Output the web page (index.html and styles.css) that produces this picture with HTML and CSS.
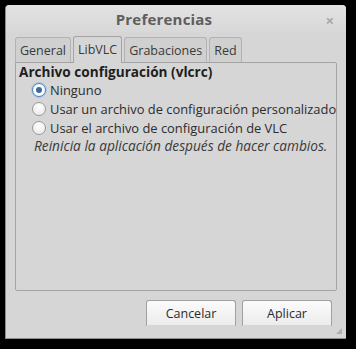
FILE: index.html
```html
<!DOCTYPE html>
<html>
<head>
<meta charset="utf-8">
<link rel="stylesheet" href="styles.css">
</head>
<body>
<div class="window">
  <div class="titlebar">
    <span class="title">Preferencias</span>
    <span class="close">×</span>
  </div>
  <div class="tabs">
    <div class="tab">General</div>
    <div class="tab active">LibVLC</div>
    <div class="tab">Grabaciones</div>
    <div class="tab">Red</div>
  </div>
  <div class="panel">
    <div class="heading">Archivo configuración (vlcrc)</div>
    <div class="options">
      <label class="option"><span class="radio checked"></span>Ninguno</label>
      <label class="option"><span class="radio"></span>Usar un archivo de configuración personalizado</label>
      <label class="option"><span class="radio"></span>Usar el archivo de configuración de VLC</label>
      <div class="note">Reinicia la aplicación después de hacer cambios.</div>
    </div>
  </div>
  <div class="buttons">
    <button class="btn">Cancelar</button>
    <button class="btn">Aplicar</button>
  </div>
  <div class="grip"></div>
</div>
</body>
</html>
```
FILE: styles.css
```css
html, body {
  margin: 0;
  padding: 0;
  background: #000;
  width: 356px;
  height: 349px;
  overflow: hidden;
}
.window {
  margin: 5px 0 0 5px;
  width: 341px;
  height: 334px;
  box-sizing: border-box;
  background: #d6d6d6;
  border-radius: 4px 4px 0 0;
  border-left: 1px solid #8c8c8c;
  border-bottom: 1px solid #8c8c8c;
  display: flex;
  flex-direction: column;
  font-family: "Open Sans", "DejaVu Sans", sans-serif;
  font-size: 12.5px;
  color: #3c3c3c;
  position: relative;
  white-space: nowrap;
}
.titlebar {
  height: 27px;
  background: linear-gradient(#e2e2e2, #d8d8d8);
  border-radius: 4px 4px 0 0;
  display: flex;
  align-items: center;
  justify-content: center;
  position: relative;
}
.title {
  font-weight: bold;
  font-size: 15px;
  color: #5e5e5e;
  margin-left: -24px;
  letter-spacing: 0.2px;
}
.close {
  position: absolute;
  right: 12px;
  top: 5px;
  font-size: 15px;
  font-weight: bold;
  color: #a8a8a8;
}
.tabs {
  display: flex;
  align-items: flex-end;
  padding-left: 9px;
  height: 30px;
  box-sizing: border-box;
  gap: 2px;
}
.tab {
  height: 25px;
  box-sizing: border-box;
  padding: 0 4px;
  border: 1px solid #b2b2b2;
  border-bottom: none;
  border-radius: 3px 3px 0 0;
  background: #d0d0d0;
  display: flex;
  align-items: center;
  color: #3a3a3a;
}
.tab.active {
  height: 27px;
  background: #d6d6d6;
  border-color: #a4a4a4;
  position: relative;
  top: 1px;
  padding-bottom: 2px;
}
.panel {
  margin: 0 9px;
  height: 229px;
  box-sizing: border-box;
  border: 1px solid #a4a4a4;
  border-radius: 0 2px 2px 2px;
  padding: 0 3px;
}
.heading {
  font-weight: bold;
  font-size: 13.6px;
  color: #1e1e1e;
  line-height: 16px;
  margin-top: 1px;
}
.options {
  padding-left: 13px;
  display: flex;
  flex-direction: column;
}
.option {
  display: flex;
  align-items: center;
  height: 19px;
  font-size: 12.9px;
  color: #2c2c2c;
}
.radio {
  flex-shrink: 0;
  width: 12px;
  height: 12px;
  border-radius: 50%;
  border: 1px solid #9a9a9a;
  background: radial-gradient(circle at 50% 30%, #ffffff, #e6e6e6);
  margin-right: 4px;
  position: relative;
}
.radio.checked {
  border-color: #4f7fb8;
  background: radial-gradient(circle, #ffffff 60%, #c2d8f0);
  box-shadow: 0 0 0 1px #a9c6e8;
}
.radio.checked::after {
  content: "";
  position: absolute;
  left: 3px;
  top: 3px;
  width: 6px;
  height: 6px;
  border-radius: 50%;
  background: #3b6aa6;
}
.note {
  font-style: italic;
  font-size: 13.7px;
  color: #3a3a3a;
  padding-left: 2px;
  line-height: 17px;
}
.buttons {
  display: flex;
  justify-content: flex-end;
  gap: 6px;
  padding: 9px 14px 0 0;
}
.btn {
  width: 90px;
  height: 26px;
  border: 1px solid #a0a0a0;
  border-bottom-color: #d6d6d6;
  border-radius: 3px 3px 0 0;
  background: linear-gradient(#fbfbfb, #ececec);
  font-family: "Open Sans", "DejaVu Sans", sans-serif;
  font-size: 12.5px;
  color: #2a2a2a;
  padding: 0;
}
.grip {
  position: absolute;
  right: 4px;
  bottom: 4px;
  width: 0;
  height: 0;
  border-left: 6px solid transparent;
  border-bottom: 6px solid #b0b0b0;
}
```
